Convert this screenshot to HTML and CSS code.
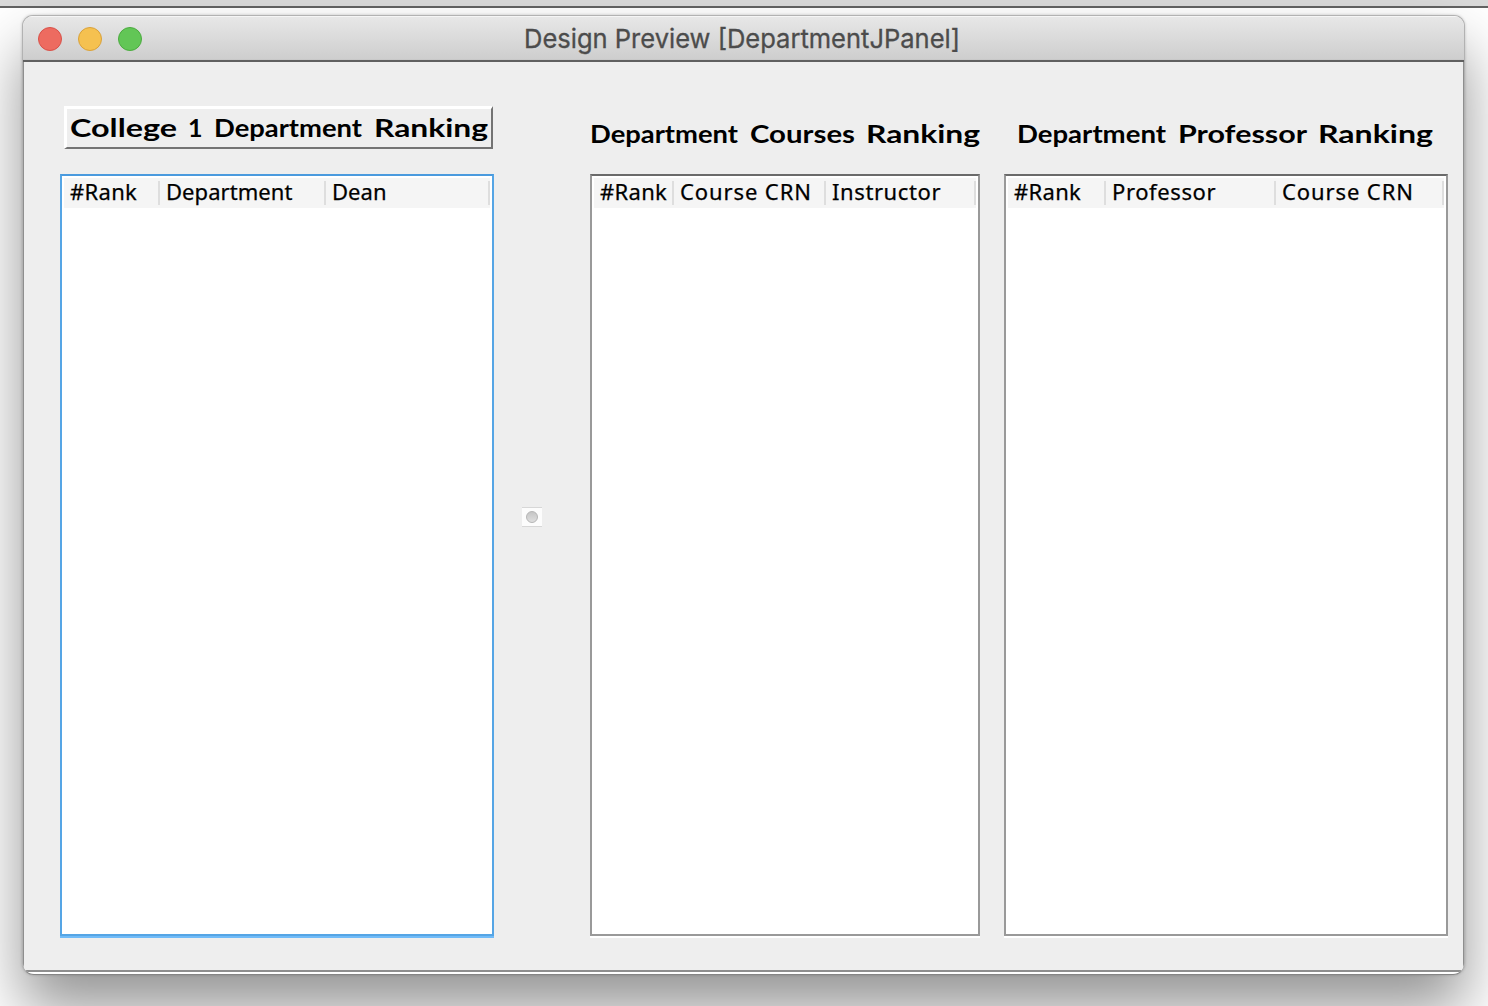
FILE: index.html
```
<!DOCTYPE html>
<html lang="en">
<head>
<meta charset="utf-8">
<title>Design Preview</title>
<link rel="stylesheet" href="styles.css">
</head>
<body>
<div class="backdrop-bar"></div>
<main class="window">
  <header class="titlebar">
    <div class="lights"><i class="light close"></i><i class="light minimize"></i><i class="light expand"></i></div>
    <svg class="window-title" width="440" height="40"><text x="0" y="29" textLength="436" lengthAdjust="spacingAndGlyphs">Design Preview [DepartmentJPanel]</text></svg>
  </header>
  <div class="panel">
    <section class="column first">
      <svg class="heading framed" width="425" height="39">
        <text x="3" y="28" textLength="107" lengthAdjust="spacingAndGlyphs">College</text>
        <text x="121" y="28">1</text>
        <text x="147" y="28" textLength="148" lengthAdjust="spacingAndGlyphs">Department</text>
        <text x="307" y="28" textLength="114" lengthAdjust="spacingAndGlyphs">Ranking</text>
      </svg>
      <div class="table focused">
        <div class="head"><span class="c97">#Rank</span><span class="c166 snug">Department</span><span class="c165 snug">Dean</span></div>
      </div>
    </section>
    <div class="handle"><i></i></div>
    <section class="column second">
      <svg class="heading" width="390" height="43">
        <text x="0" y="37" textLength="148" lengthAdjust="spacingAndGlyphs">Department</text>
        <text x="160" y="37" textLength="105" lengthAdjust="spacingAndGlyphs">Courses</text>
        <text x="276" y="37" textLength="114" lengthAdjust="spacingAndGlyphs">Ranking</text>
      </svg>
      <div class="table">
        <div class="head"><span class="c81">#Rank</span><span class="c152 wide">Course CRN</span><span class="c150 loose">Instructor</span></div>
      </div>
    </section>
    <section class="column third">
      <svg class="heading" width="444" height="43">
        <text x="13" y="37" textLength="149" lengthAdjust="spacingAndGlyphs">Department</text>
        <text x="174" y="37" textLength="129" lengthAdjust="spacingAndGlyphs">Professor</text>
        <text x="314" y="37" textLength="115" lengthAdjust="spacingAndGlyphs">Ranking</text>
      </svg>
      <div class="table">
        <div class="head"><span class="c99">#Rank</span><span class="c170 loose">Professor</span><span class="c168 wide">Course CRN</span></div>
      </div>
    </section>
  </div>
</main>
</body>
</html>
```
FILE: styles.css
```
* { box-sizing: border-box; }
body {
  margin: 0;
  width: 1488px;
  height: 1006px;
  overflow: hidden;
  background: #fff;
}
.backdrop-bar {
  height: 8px;
  background: #dadada;
  border-bottom: 2px solid #626262;
}
.window {
  width: 1443px;
  height: 960px;
  margin: 7px 0 0 22px;
  border: 1px solid #b2b2b2;
  border-bottom-color: #858585;
  border-radius: 11px 11px 12px 12px;
  overflow: hidden;
  display: flex;
  flex-direction: column;
  background: #fff;
  box-shadow: 0 34px 60px rgba(0, 0, 0, .42), 0 0 3px rgba(0, 0, 0, .2);
}
.titlebar {
  height: 46px;
  flex: none;
  display: grid;
  grid-template-columns: 501px 440px;
  align-items: center;
  background: linear-gradient(#e7e7e7, #cecece 42px, #b8b8b8 44px);
  border-top: 1px solid #f5f5f5;
  border-bottom: 2px solid #606060;
}
.lights { display: flex; gap: 16px; padding-left: 15px; }
.light { width: 24px; height: 24px; border-radius: 50%; border: 1px solid; }
.close { background: #ed6b60; border-color: #d85149; }
.minimize { background: #f5c150; border-color: #d9a13a; }
.expand { background: #62c656; border-color: #4bab3f; }
.window-title {
  overflow: visible;
  font: 400 26px Inter, sans-serif;
  fill: #4c4c4c;
  stroke: #4c4c4c;
  stroke-width: .3px;
}
.panel {
  height: 910px;
  flex: none;
  display: flex;
  background: #eee;
  border: solid #8e8e8e;
  border-width: 0 1px 2px;
  padding: 44px 0 0 36px;
}
.column { display: flex; flex-direction: column; }
.first { width: 434px; }
.second { width: 390px; margin-left: 48px; }
.third { width: 444px; margin-left: 24px; }
.heading {
  display: block;
  flex: none;
  margin-bottom: 25px;
  overflow: visible;
  font: 700 25px Chalkduster, Lato, cursive;
  fill: #000;
}
.framed {
  box-sizing: content-box;
  margin-left: 4px;
  border: solid;
  border-width: 3px 2px 2px 3px;
  border-color: #fff #737373 #737373 #fff;
  margin-bottom: 24px;
  width: 424px;
  height: 38px;
}
.framed + .table { margin-top: 1px; }
.table {
  height: 762px;
  background: #fff;
  border: 2px solid #999;
  border-top-color: #6a6a6a;
  box-shadow: 0 2px #fff;
}
.focused {
  border-color: #55a5e5;
  border-top-color: #4a9ade;
  box-shadow: 0 2px #70bbf8;
}
.head {
  display: flex;
  height: 32px;
  margin: 0 2px;
  padding-top: 5px;
  background: linear-gradient(#fff 2px, #f5f5f5 2px);
  font: 22px "Noto Sans", sans-serif;
  letter-spacing: .3px;
  -webkit-text-stroke: .25px #000;
}
.head span {
  height: 24px;
  padding-left: 6px;
  border-right: 2px solid #dedede;
  line-height: 21px;
  white-space: nowrap;
}
.head .snug { letter-spacing: .05px; }
.head .loose { letter-spacing: .6px; }
.head .wide { letter-spacing: .9px; }
.c97 { width: 96px; }
.c166 { width: 166px; }
.c165 { width: 164px; }
.c81 { width: 80px; }
.c152 { width: 152px; }
.c150 { width: 150px; }
.c99 { width: 98px; }
.c170 { width: 170px; }
.c168 { width: 168px; }
.handle {
  width: 20px;
  height: 20px;
  margin: 401px 0 0 28px;
  display: grid;
  place-items: center;
  background: #fcfcfc;
  border: solid #d7d7d7;
  border-width: 1px 0;
}
.handle i {
  width: 12px;
  height: 12px;
  border-radius: 50%;
  border: 1px solid #b5b5b5;
  background: linear-gradient(#c5c5c5, #dedede);
}
```
